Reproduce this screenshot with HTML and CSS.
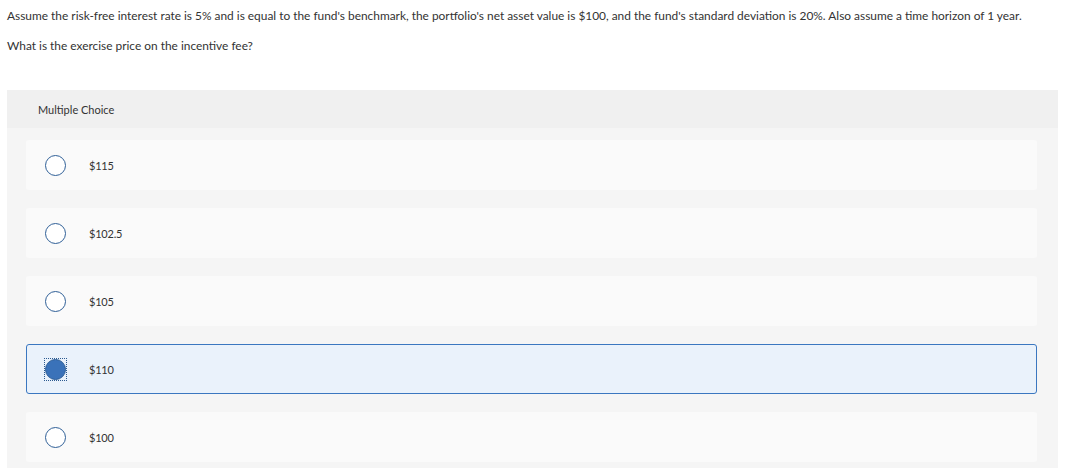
FILE: index.html
```html
<!DOCTYPE html>
<html>
<head>
<meta charset="utf-8">
<link rel="stylesheet" href="styles.css">
</head>
<body>
<div class="page">
  <p class="q">Assume the risk-free interest rate is 5% and is equal to the fund's benchmark, the portfolio's net asset value is $100, and the fund's standard deviation is 20%. Also assume a time horizon of 1 year.</p>
  <p class="q q2">What is the exercise price on the incentive fee?</p>
  <div class="panel">
    <div class="head">Multiple Choice</div>
    <div class="body">
      <div class="opt"><span class="radio"></span><span class="lbl">$115</span></div>
      <div class="opt"><span class="radio"></span><span class="lbl">$102.5</span></div>
      <div class="opt"><span class="radio"></span><span class="lbl">$105</span></div>
      <div class="opt sel"><span class="focus"><span class="radio"></span></span><span class="lbl">$110</span></div>
      <div class="opt"><span class="radio"></span><span class="lbl">$100</span></div>
    </div>
  </div>
</div>
</body>
</html>
```
FILE: styles.css
```css
html, body { margin: 0; padding: 0; background: #fff; }
body { font-family: Lato, "Open Sans", sans-serif; color: #333; font-size: 11.9px; }
.page { padding: 0 7px; width: 1051px; }
.q { margin: 0; padding-top: 9px; line-height: 14px; white-space: nowrap; }
.q2 { padding-top: 16px; }
.panel { margin-top: 37px; background: #f5f5f5; }
.head { height: 38px; background: #f0f0f0; display: flex; align-items: center; padding-left: 31px; font-size: 11px; color: #333; }
.body { padding: 12px 21px 10px 19px; display: flex; flex-direction: column; gap: 18px; }
.opt { height: 50px; background: #fafafa; border-radius: 3px; display: flex; align-items: center; padding-left: 19px; box-sizing: border-box; }
.radio { width: 19px; height: 19px; border: 1.5px solid #2f5f97; border-radius: 50%; background: #fff; box-sizing: content-box; flex: none; }
.lbl { margin-left: 23px; font-size: 11px; color: #333; letter-spacing: -0.2px; }
.sel { background: #eaf2fb; border: 1px solid #3b77c0; padding-left: 18px; }
.focus { outline: 1px dotted #2c5a90; outline-offset: 0; display: flex; }
.sel .radio { background: #3a72b9; border-color: #2f5f97; }
```
